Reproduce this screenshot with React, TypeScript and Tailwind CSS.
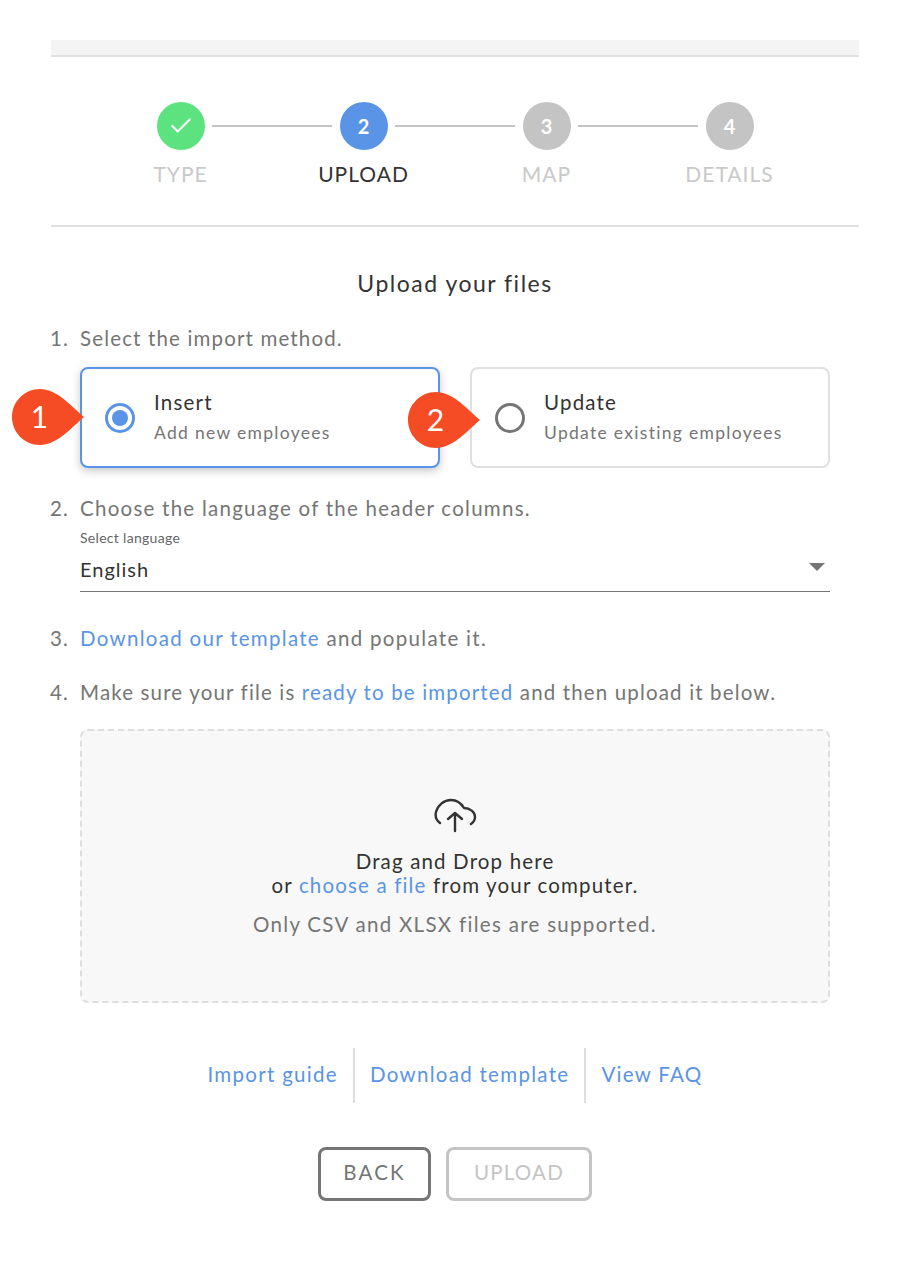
import { Check } from "lucide-react";

const steps = [
  { n: "1", label: "TYPE", done: true },
  { n: "2", label: "UPLOAD", active: true },
  { n: "3", label: "MAP" },
  { n: "4", label: "DETAILS" },
];

function Pin({ n, className }: { n: string; className: string }) {
  return (
    <svg viewBox="0 0 72 56" className={`absolute h-[56px] w-[72px] ${className}`}>
      <path d="M28 0 C44 0 56 14 72 28 C56 42 44 56 28 56 C12 56 0 43 0 28 C0 13 12 0 28 0 Z" fill="#f64c25" />
      <text x="28" y="39" textAnchor="middle" fontSize="30" fill="#fff">
        {n}
      </text>
    </svg>
  );
}

function MethodCard({ title, sub, selected }: { title: string; sub: string; selected?: boolean }) {
  return (
    <div
      className={`flex h-[101px] w-[360px] items-center rounded-lg border-2 bg-white pl-[23px] ${
        selected ? "border-[#5a94e6] shadow-[0_3px_8px_rgba(0,0,0,0.22)]" : "border-[#e0e0e0]"
      }`}
    >
      <span
        className={`flex h-[30px] w-[30px] items-center justify-center rounded-full border-[3px] ${
          selected ? "border-[#5a94e6]" : "border-[#757575]"
        }`}
      >
        {selected && <span className="h-[16px] w-[16px] rounded-full bg-[#5a94e6]" />}
      </span>
      <div className="ml-[19px] pb-[1px]">
        <div className="text-[20.5px] leading-[30px] tracking-[1.2px] text-[#333]">{title}</div>
        <div className="mt-[2px] text-[17.5px] leading-[28px] tracking-[1.3px] text-[#757575]">{sub}</div>
      </div>
    </div>
  );
}

export default function App() {
  return (
    <div className="h-[1288px] bg-white pl-[51px] pr-[40px] pt-[40px] font-['Lato','Noto_Sans',sans-serif]">
      <div className="h-[17px] border-b-2 border-[#e0e0e0] bg-[#f4f4f4]" />

      {/* Stepper */}
      <div className="h-[170px] border-b-2 border-[#e0e0e0] pt-[45px]">
        <div className="flex items-center justify-center">
          {steps.map((s, i) => (
            <div key={s.n} className="flex items-center">
              <div
                className={`flex h-12 w-12 items-center justify-center rounded-full text-[20px] font-bold text-white ${
                  s.done ? "bg-[#5ce37f]" : s.active ? "bg-[#5a94e6]" : "bg-[#c4c4c4]"
                }`}
              >
                {s.done ? <Check size={26} strokeWidth={2} /> : s.n}
              </div>
              {i < 3 && <div className="ml-[7px] mr-[8px] h-[2px] w-[120px] bg-[#c4c4c4]" />}
            </div>
          ))}
        </div>
        <div className="mx-auto mt-[9px] grid w-[732px] grid-cols-4 text-center text-[21px] leading-[30px] tracking-[1px]">
          {steps.map((s) => (
            <div key={s.label} className={s.active ? "text-[#333]" : "text-[#c9c9c9]"}>
              {s.label}
            </div>
          ))}
        </div>
      </div>

      <h2 className="mt-[40px] text-center text-[23px] leading-[32px] tracking-[1.5px] text-[#333]">Upload your files</h2>

      <div className="relative text-[20.5px] tracking-[1.15px] text-[#757575]">
        <div className="mt-[24px] flex leading-[30px]">
          <span className="ml-[-1px] w-[30px]">1.</span>
          <span>Select the import method.</span>
        </div>
        <div className="ml-[29px] mt-[14px] flex gap-[30px]">
          <MethodCard title="Insert" sub="Add new employees" selected />
          <MethodCard title="Update" sub="Update existing employees" />
        </div>
        <Pin n="1" className="left-[-39px] top-[66px]" />
        <Pin n="2" className="left-[357px] top-[69px]" />

        <div className="mt-[25px] flex leading-[30px]">
          <span className="ml-[-1px] w-[30px]">2.</span>
          <span className="tracking-[1.25px]">Choose the language of the header columns.</span>
        </div>
        <div className="relative ml-[29px] h-[69px] w-[750px] border-b border-[#757575] pt-[5px]">
          <div className="text-[14px] leading-[20px] tracking-[0.3px] text-[#666]">Select language</div>
          <div className="mt-[8px] text-[20px] leading-[26px] tracking-[1px] text-[#333]">English</div>
          <span className="absolute right-[5px] top-[40px] h-0 w-0 border-x-[8px] border-t-[8px] border-x-transparent border-t-[#757575]" />
        </div>

        <div className="mt-[31px] flex leading-[30px]">
          <span className="ml-[-1px] w-[30px]">3.</span>
          <span className="tracking-[1.3px]">
            <span className="text-[#5a94e6]">Download our template</span> and populate it.
          </span>
        </div>
        <div className="mt-[24px] flex leading-[30px]">
          <span className="ml-[-1px] w-[30px]">4.</span>
          <span>
            Make sure your file is <span className="text-[#5a94e6]">ready to be imported</span> and then upload it below.
          </span>
        </div>

        {/* Drop zone */}
        <div className="ml-[29px] mt-[22px] flex h-[274px] w-[750px] flex-col items-center rounded-lg border-2 border-dashed border-[#dedede] bg-[#f8f8f8] pt-[66px] text-center">
          <svg width="44" height="38" viewBox="0 0 44 38" fill="none" stroke="#333" strokeWidth="2.4" strokeLinecap="round" strokeLinejoin="round">
            <path d="M7 26 C3 23 2 19 3 15 C5 8 11 3 18 3 C24 3 28 6 31 11 C37 11 42 15 42 20 C42 23 41 25 38 27" />
            <path d="M22 34 V16 M15 22 L22 16 L29 22" />
          </svg>
          <div className="mt-[14px] leading-[24px] text-[#333]">Drag and Drop here</div>
          <div className="leading-[24px] text-[#333]">
            or <span className="text-[#5a94e6]">choose a file</span> from your computer.
          </div>
          <div className="mt-[15px] leading-[24px] tracking-[1.3px] text-[#757575]">Only CSV and XLSX files are supported.</div>
        </div>

        {/* Footer links */}
        <div className="mt-[45px] flex h-[55px] items-center justify-center tracking-[1.3px] text-[#5a94e6]">
          <span className="flex h-full items-center border-r-2 border-[#dedede] pb-[3px] pr-[15px]">Import guide</span>
          <span className="flex h-full items-center border-r-2 border-[#dedede] px-[15px] pb-[3px]">Download template</span>
          <span className="pb-[3px] pl-[15px]">View FAQ</span>
        </div>

        <div className="mt-[44px] flex justify-center gap-[15px]">
          <button className="h-[54px] w-[113px] rounded-lg border-[3px] border-[#757575] pb-[3px] tracking-[2.2px] text-[#757575]">BACK</button>
          <button className="h-[54px] w-[146px] rounded-lg border-[3px] border-[#c4c4c4] pb-[3px] tracking-[1.2px] text-[#c4c4c4]">UPLOAD</button>
        </div>
      </div>
    </div>
  );
}
